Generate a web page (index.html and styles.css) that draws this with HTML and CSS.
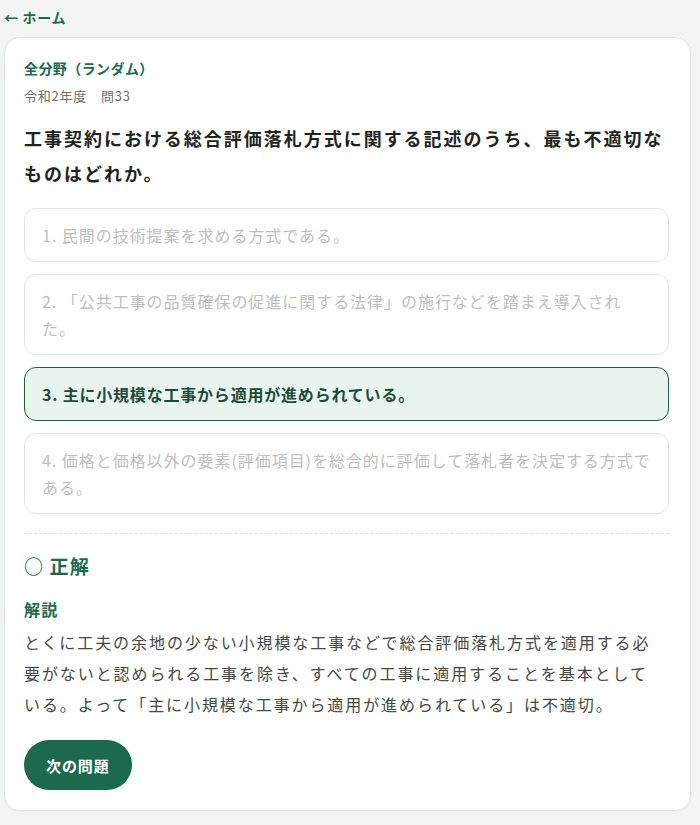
FILE: index.html
```html
<!DOCTYPE html>
<html lang="ja">
<head>
<meta charset="utf-8">
<title>全分野（ランダム）</title>
<link rel="stylesheet" href="styles.css">
</head>
<body>
<a class="back" href="#">← ホーム</a>
<main class="card">
  <div class="category">全分野（ランダム）</div>
  <div class="meta">令和2年度　問33</div>
  <h1 class="question">工事契約における総合評価落札方式に関する記述のうち、最も不適切なものはどれか。</h1>
  <div class="options">
    <div class="option disabled">1. 民間の技術提案を求める方式である。</div>
    <div class="option disabled">2. 「公共工事の品質確保の促進に関する法律」の施行などを踏まえ導入された。</div>
    <div class="option selected">3. 主に小規模な工事から適用が進められている。</div>
    <div class="option disabled">4. 価格と価格以外の要素(評価項目)を総合的に評価して落札者を決定する方式である。</div>
  </div>
  <div class="result">
    <div class="verdict">○ 正解</div>
    <div class="exp-title">解説</div>
    <p class="exp">とくに工夫の余地の少ない小規模な工事などで総合評価落札方式を適用する必要がないと認められる工事を除き、すべての工事に適用することを基本としている。よって「主に小規模な工事から適用が進められている」は不適切。</p>
    <button class="next">次の問題</button>
  </div>
</main>
</body>
</html>
```

FILE: styles.css
```css
html, body {
  margin: 0;
  background: #f3f5f4;
}
body {
  padding: 5px 9px 14px 4px;
  font-family: "Noto Sans CJK JP", "Noto Sans", sans-serif;
  color: #1f2421;
}
.back {
  display: block;
  font-size: 14px;
  font-weight: 700;
  line-height: 24px;
  letter-spacing: 0.05em;
  color: #1a6b4f;
  text-decoration: none;
  margin-bottom: 8px;
}
.card {
  display: block;
  background: #fff;
  border: 1px solid #e4e7e6;
  border-radius: 16px;
  padding: 20px 21px 20px 19px;
  box-shadow: 0 1px 3px rgba(0, 0, 0, 0.04);
}
.category {
  font-size: 14px;
  font-weight: 700;
  line-height: 20px;
  color: #1a6b4f;
  letter-spacing: 0.03em;
}
.meta {
  margin-top: 8px;
  font-size: 13px;
  line-height: 20px;
  letter-spacing: 0.06em;
  color: #6d6f6e;
}
.question {
  margin: 15px 0 0;
  font-size: 18px;
  font-weight: 700;
  line-height: 34.5px;
  letter-spacing: 0.11em;
  color: #1f2421;
}
.options {
  margin-top: 18px;
  display: flex;
  flex-direction: column;
  gap: 12px;
}
.option {
  border: 1px solid #e3e6e5;
  border-radius: 12px;
  padding: 13px 16px 12px 17px;
  font-size: 16px;
  line-height: 27px;
  letter-spacing: 0.06em;
  background: #fff;
}
.option.disabled {
  color: #bdbfbe;
}
.option.selected {
  background: #e8f5ee;
  border-color: #1d5e47;
  color: #1d4a3a;
  font-weight: 700;
  letter-spacing: 0.05em;
}
.result {
  margin-top: 19px;
  border-top: 1px dashed #dfe3e1;
  padding-top: 18px;
}
.verdict {
  font-size: 19px;
  font-weight: 700;
  line-height: 28px;
  color: #1a6b4f;
  letter-spacing: 0.06em;
}
.exp-title {
  margin-top: 17px;
  font-size: 16px;
  font-weight: 700;
  line-height: 24px;
  letter-spacing: 0.08em;
  color: #1a6b4f;
}
.exp {
  margin: 6px 5px 0 0;
  font-size: 16px;
  line-height: 31px;
  letter-spacing: 0.12em;
  color: #444846;
}
.next {
  margin-top: 20px;
  height: 50px;
  padding: 0 22px;
  border: none;
  border-radius: 25px;
  background: #1b6a4e;
  color: #fff;
  font-family: "Noto Sans CJK JP", "Noto Sans", sans-serif;
  font-size: 15px;
  font-weight: 700;
  letter-spacing: 0.06em;
  cursor: pointer;
}
```
